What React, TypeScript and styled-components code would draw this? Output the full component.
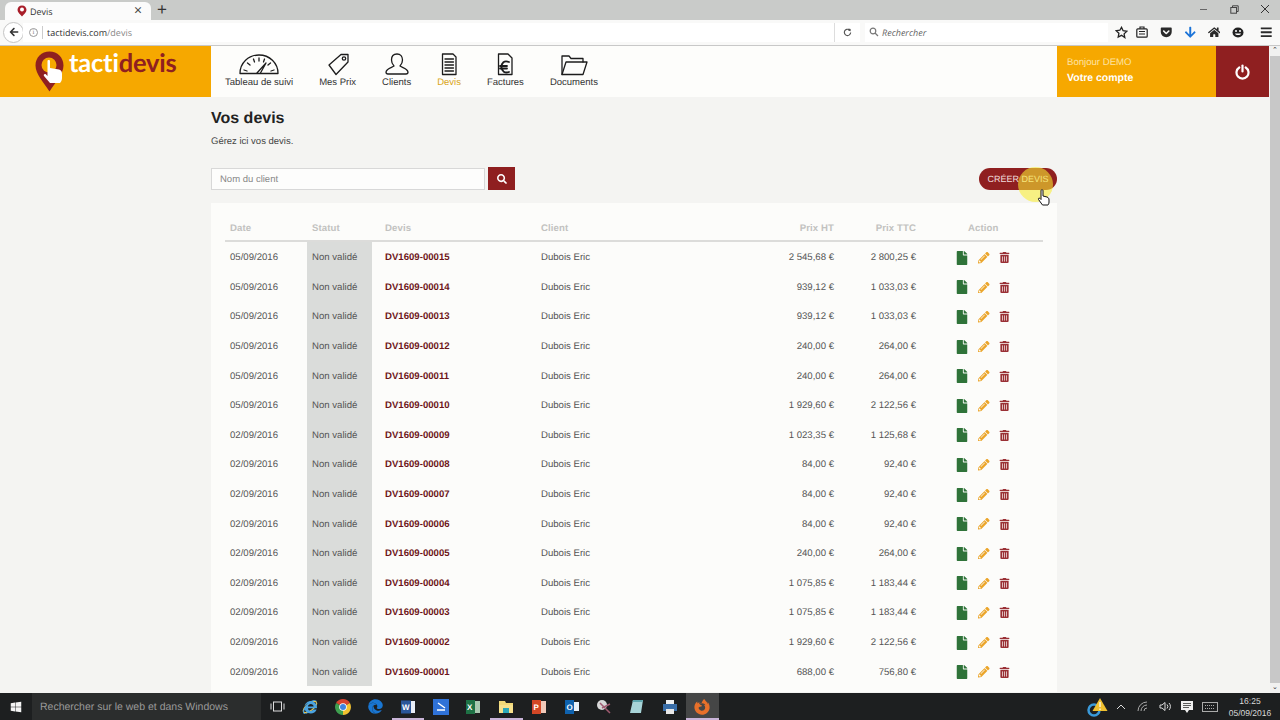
import React from "react";
import styled, { createGlobalStyle } from "styled-components";
import { FaWindows, FaInternetExplorer, FaEdge, FaFirefoxBrowser, FaTrashAlt, FaPencilAlt, FaFile, FaSearch, FaArrowLeft, FaHome, FaArrowDown, FaBars, FaGetPocket } from "react-icons/fa";

const Global = createGlobalStyle`
  html, body { margin: 0; padding: 0; width: 1280px; height: 720px; overflow: hidden; }
  body { font-family: "Liberation Sans", Arial, sans-serif; background: #f4f4f2; text-rendering: geometricPrecision; }
  * { box-sizing: border-box; }
`;

const Screen = styled.div`
  position: relative; width: 1280px; height: 720px; display: flex; flex-direction: column; overflow: hidden;
`;
const TabStrip = styled.div`
  height: 20px; background: #c9cbc9; display: flex; align-items: flex-end; padding-left: 5px; flex: none;
`;
const Tab = styled.div`
  width: 146px; height: 18px; background: #fbfbfb; border-radius: 6px 6px 0 0; display: flex; align-items: center;
  padding: 0 9px 0 12px; gap: 3px; font: 9px "Open Sans", sans-serif; color: #333;
`;
const TabTitle = styled.span` flex: 1; `;
const TabClose = styled.span` font-size: 14px; color: #444; line-height: 1; `;
const NewTab = styled.span` margin-left: 6px; margin-bottom: 1px; font: 17px/18px "Liberation Sans", sans-serif; color: #333; `;
const WinControls = styled.div` margin-left: auto; align-self: stretch; display: flex; `;
const WinBtn = styled.span`
  width: 30.5px; display: flex; align-items: center; justify-content: center; padding-bottom: 2px; color: #444;
`;
const NavBar = styled.div`
  height: 26px; flex: none; background: #f9f9f8; border-bottom: 1px solid #c8c8c8; display: flex; align-items: center; padding: 0 0 1px 3px;
`;
const BackBtn = styled.div`
  width: 21px; height: 21px; border-radius: 50%; background: #fff; border: 1px solid #c4c4c4; display: flex; align-items: center; justify-content: center; color: #333; font-size: 10px; flex: none;
`;
const UrlBox = styled.div`
  width: 815px; height: 19px; margin-left: -1px; background: #fff; display: flex; align-items: center; padding-left: 6px; gap: 3px; font: 9px "Open Sans", sans-serif; color: #333; flex: none;
`;
const InfoDot = styled.span`
  width: 9px; height: 9px; border-radius: 50%; border: 1px solid #999; font: 7px/7px "Liberation Serif", serif; color: #888; text-align: center; flex: none; margin-right: 1px;
`;
const UrlSep = styled.span` width: 1px; height: 13px; background: #ccc; flex: none; margin-right: 1px; `;
const UrlPath = styled.span` color: #888; `;
const Reload = styled.div`
  width: 26px; height: 19px; background: #fff; border-left: 1px solid #ddd; margin-left: -4px; display: flex; align-items: center; justify-content: center; color: #555; flex: none;
`;
const SearchBox = styled.div`
  width: 243px; height: 19px; margin-left: 5px; background: #fff; display: flex; align-items: center; gap: 3px; padding-left: 4px;
  font: italic 9px "Open Sans", sans-serif; color: #666; flex: none;
`;
const ToolIcons = styled.div` display: flex; align-items: center; flex: none; margin-left: 1px; `;
const ToolSlot = styled.span<{ $w?: number; $c?: string }>`
  width: ${p => p.$w ?? 24}px; display: flex; justify-content: center; align-items: center; font-size: 12.5px; color: ${p => p.$c ?? "#2a2a2a"};
`;

const Viewport = styled.div` flex: 1; min-height: 0; display: flex; `;
const Page = styled.div` flex: 1; min-width: 0; display: flex; flex-direction: column; `;
const ScrollTrack = styled.div`
  width: 10px; flex: none; margin-left: 1px; background: #f1f1f0; display: flex; flex-direction: column; align-items: center;
`;
const ScrollArrow = styled.div` height: 10px; font-size: 7px; line-height: 10px; color: #333; flex: none; `;
const ScrollThumb = styled.div` width: 100%; flex: 1; background: #c8c8c8; `;

const Header = styled.header` height: 51px; flex: none; display: flex; background: #fdfdfb; `;
const LogoPanel = styled.div`
  width: 211px; background: #f6a800; display: flex; align-items: flex-start; padding: 5px 0 0 35px; gap: 5px; flex: none;
`;
const LogoText = styled.div` font: 700 25.5px/25px Lato, sans-serif; color: #fff; letter-spacing: -0.2px; `;
const LogoAccent = styled.span` color: #8f2020; `;
const Nav = styled.nav` display: flex; gap: 26px; padding-left: 14px; flex: 1; `;
const NavItem = styled.div<{ $active?: boolean }>`
  display: flex; flex-direction: column; align-items: center; font-size: 9.5px; line-height: 12px; color: ${p => p.$active ? "#d9a520" : "#333"};
  padding-top: 6px; white-space: nowrap;
`;
const NavIcon = styled.svg`
  height: 24px; width: 44px; margin: 0 -12px 1px; fill: none; stroke: #1c1c1c; stroke-width: 1.3; stroke-linejoin: round; stroke-linecap: round; flex: none;
`;
const Account = styled.div` width: 159px; background: #f6a800; color: #fff; padding: 11px 0 0 10px; flex: none; `;
const Hello = styled.div` font-size: 9.6px; color: #fde3a4; line-height: 12px; `;
const YourAccount = styled.div` font-size: 10.5px; font-weight: 700; line-height: 16px; margin-top: 1px; `;
const Logout = styled.div` width: 53px; background: #8f1f20; display: flex; align-items: center; justify-content: center; flex: none; `;

const Content = styled.main` flex: 1; min-height: 0; padding: 12px 0 0 211px; overflow: hidden; `;
const Title = styled.h1` margin: 0; font-size: 16px; line-height: 20px; font-weight: 700; color: #222; `;
const Sub = styled.p` margin: 6px 0 0; font-size: 9.5px; line-height: 14px; color: #444; `;
const Tools = styled.div` width: 846px; display: flex; align-items: center; margin-top: 18px; height: 23px; `;
const NameInput = styled.div`
  width: 274px; height: 22px; background: #fdfdfc; border: 1px solid #d8d8d8; padding-left: 8px; font-size: 9.5px; line-height: 21px; color: #888;
`;
const SearchBtn = styled.div`
  width: 27px; height: 23px; margin-left: 3px; background: #8f1f20; color: #fff; display: flex; align-items: center; justify-content: center; font-size: 10px;
`;
const CreateBtn = styled.div`
  margin-left: auto; width: 78px; height: 22px; border-radius: 11px; background: #8f1f20; color: #f0dcdc; font-size: 9px; line-height: 22px; text-align: center;
`;
const Card = styled.section` width: 846px; margin-top: 13px; background: #fcfcfa; padding: 12px 14px 0; height: 489px; `;
const cols = "82px 65px 156px 190px 116px 82px 1fr";
const HeadRow = styled.div`
  display: grid; grid-template-columns: ${cols}; height: 27px; align-items: center; border-bottom: 2px solid #dcdcda; padding-top: 2px;
  font-size: 9.6px; font-weight: 700; color: #c2c2c0; letter-spacing: 0.1px;
`;
const Row = styled.div`
  display: grid; grid-template-columns: ${cols}; height: 29.6px; align-items: stretch; font-size: 9.6px; color: #555;
`;
const Cell = styled.div<{ $right?: boolean; $pad?: number }>`
  display: flex; align-items: center; padding-left: ${p => p.$pad ?? 0}px; justify-content: ${p => p.$right ? "flex-end" : "flex-start"};
`;
const BodyCell = styled(Cell)` padding-top: 2px; `;
const StatusCell = styled(BodyCell)` background: #dadcda; padding-left: 5px; `;
const RefCell = styled(BodyCell)` font-weight: 700; color: #6d1518; padding-left: 13px; `;
const HeadRight = styled.div` text-align: right; `;
const ActionHead = styled.div` padding-left: 52px; `;
const Actions = styled.div` display: flex; align-items: center; padding-left: 39px; gap: 9px; padding-top: 2px; `;
const GreenDoc = styled.span` color: #2f7339; font-size: 14px; display: flex; `;
const Pencil = styled.span` color: #eba52a; font-size: 11.5px; display: flex; `;
const Trash = styled.span` color: #9a3035; font-size: 11px; display: flex; `;

const Highlight = styled.div`
  position: absolute; left: 1018px; top: 167px; width: 35px; height: 35px; border-radius: 50%; background: rgba(250, 238, 50, 0.58); pointer-events: none;
`;
const CursorHand = styled.svg` position: absolute; left: 1037px; top: 189px; width: 13px; height: 17px; `;

const Taskbar = styled.footer` height: 27px; flex: none; background: #1d1f20; display: flex; align-items: stretch; color: #ddd; `;
const StartBtn = styled.div` width: 32px; display: flex; align-items: center; justify-content: center; color: #f4f4f4; font-size: 12px; flex: none; `;
const TaskSearch = styled.div` width: 229px; background: #2b2d2d; padding-left: 8px; font-size: 10.5px; line-height: 28px; color: #9a9a9a; flex: none; white-space: nowrap; `;
const Slot = styled.div<{ $active?: boolean; $open?: boolean }>`
  width: 32.7px; flex: none; display: flex; align-items: center; justify-content: center; font-size: 15px;
  background: ${p => p.$active ? "#454646" : "transparent"};
  box-shadow: ${p => p.$open ? "inset 0 -2px 0 #c9b4d8" : "none"};
`;
const Tray = styled.div` margin-left: auto; display: flex; align-items: center; flex: none; `;
const TraySlot = styled.div<{ $w: number }>` width: ${p => p.$w}px; display: flex; justify-content: center; align-items: center; `;
const Clock = styled.div` width: 56px; margin-right: 2px; font-size: 8.5px; line-height: 12px; text-align: center; color: #ddd; `;

const Sq = styled.svg` width: 16px; height: 16px; display: block; `;
const SvgLetter = styled.text` font: 700 8px "Liberation Sans", sans-serif; fill: #fff; `;

const data: [string, string, string, string][] = [
  ["05/09/2016", "00015", "2 545,68 €", "2 800,25 €"],
  ["05/09/2016", "00014", "939,12 €", "1 033,03 €"],
  ["05/09/2016", "00013", "939,12 €", "1 033,03 €"],
  ["05/09/2016", "00012", "240,00 €", "264,00 €"],
  ["05/09/2016", "00011", "240,00 €", "264,00 €"],
  ["05/09/2016", "00010", "1 929,60 €", "2 122,56 €"],
  ["02/09/2016", "00009", "1 023,35 €", "1 125,68 €"],
  ["02/09/2016", "00008", "84,00 €", "92,40 €"],
  ["02/09/2016", "00007", "84,00 €", "92,40 €"],
  ["02/09/2016", "00006", "84,00 €", "92,40 €"],
  ["02/09/2016", "00005", "240,00 €", "264,00 €"],
  ["02/09/2016", "00004", "1 075,85 €", "1 183,44 €"],
  ["02/09/2016", "00003", "1 075,85 €", "1 183,44 €"],
  ["02/09/2016", "00002", "1 929,60 €", "2 122,56 €"],
  ["02/09/2016", "00001", "688,00 €", "756,80 €"],
];

const Pin = () => (
  <svg width="29" height="41" viewBox="0 0 29 41">
    <path d="M14.5 0.5C6.5 0.5 0.5 6.5 0.5 14.5C0.5 23 9 32 14.5 40.5C20 32 28.5 23 28.5 14.5C28.5 6.5 22.5 0.5 14.5 0.5Z" fill="#8f2020" />
    <circle cx="14" cy="14" r="7.5" fill="#f6a800" />
    <path d="M12.5 10C12.5 8.8 15 8.8 15 10V17L24 18.5C26.5 19 27 21 27 23V27C27 29 26 31 25 32H15L9 25C8 23.5 10 22.5 11 23.5L12.5 25Z" fill="#fff" />
  </svg>
);

const ChromeLogo = () => (
  <Sq viewBox="0 0 16 16">
    <path d="M8 8L1.1 4A8 8 0 0 1 14.9 4Z" fill="#d8432f" />
    <path d="M8 8L14.9 4A8 8 0 0 1 8 16Z" fill="#f2c230" />
    <path d="M8 8L8 16A8 8 0 0 1 1.1 4Z" fill="#3e9f4f" />
    <circle cx="8" cy="8" r="3.8" fill="#fff" />
    <circle cx="8" cy="8" r="3" fill="#3f83e0" />
  </Sq>
);

const IeLogo = () => (
  <Sq viewBox="0 0 16 16">
    <ellipse cx="8" cy="8" rx="8" ry="3.5" transform="rotate(-38 8 8)" fill="none" stroke="#e8c44a" strokeWidth="1.2" />
    <foreignObject x="1" y="1" width="14" height="14"><FaInternetExplorer color="#4aa3e0" size={14} /></foreignObject>
  </Sq>
);

export default function App() {
  return (
    <Screen>
      <Global />
      <TabStrip>
        <Tab>
          <svg width="10" height="12" viewBox="0 0 10 12"><path d="M5 0.5C2.3.5.5 2.3.5 5C.5 7.5 3.5 9.5 5 11.5C6.5 9.5 9.5 7.5 9.5 5C9.5 2.3 7.7.5 5 .5Z" fill="#a81e2a" /><circle cx="5" cy="4.6" r="2" fill="#fff" /></svg>
          <TabTitle>Devis</TabTitle>
          <TabClose>×</TabClose>
        </Tab>
        <NewTab>+</NewTab>
        <WinControls>
          <WinBtn><svg width="9" height="9" viewBox="0 0 9 9"><path d="M1 4.5H8" stroke="#666" /></svg></WinBtn>
          <WinBtn><svg width="9" height="9" viewBox="0 0 9 9" fill="none" stroke="#444"><path d="M2.5 2.5V.8H8.2V6.5H6.5" /><rect x=".8" y="2.5" width="5.7" height="5.7" /></svg></WinBtn>
          <WinBtn><svg width="10" height="10" viewBox="0 0 10 10" stroke="#333"><path d="M1 1L9 9M9 1L1 9" /></svg></WinBtn>
        </WinControls>
      </TabStrip>
      <NavBar>
        <BackBtn><FaArrowLeft /></BackBtn>
        <UrlBox>
          <InfoDot>i</InfoDot>
          <UrlSep />
          <span>tactidevis.com<UrlPath>/devis</UrlPath></span>
        </UrlBox>
        <Reload><svg width="9" height="9" viewBox="0 0 10 10" fill="none" stroke="#555" strokeWidth="1.3"><path d="M8.5 5A3.5 3.5 0 1 1 7 2" /><path d="M6 .5L8.5 1V3.5L6 3Z" fill="#555" stroke="none" /></svg></Reload>
        <SearchBox>
          <svg width="10" height="10" viewBox="0 0 10 10" fill="none" stroke="#777" strokeWidth="1.2"><circle cx="4" cy="4" r="2.8" /><path d="M6 6L9 9" /></svg>
          Rechercher
        </SearchBox>
        <ToolIcons>
          <ToolSlot $w={24}><svg width="13" height="13" viewBox="0 0 24 24" fill="none" stroke="#222" strokeWidth="2.4"><path d="M12 2.5l3 6.3 6.8.9-5 4.8 1.3 6.9L12 17.2l-6.1 3.2 1.3-6.9-5-4.8 6.8-.9z" /></svg></ToolSlot>
          <ToolSlot $w={18}><svg width="12" height="12" viewBox="0 0 12 12" fill="none" stroke="#222" strokeWidth="1.2"><rect x=".8" y="2.8" width="10.4" height="8.4" rx="1" /><path d="M4 2.8V1H8V2.8M3 5.5H9M3 8H9" /></svg></ToolSlot>
          <ToolSlot $w={30}><FaGetPocket /></ToolSlot>
          <ToolSlot $w={18} $c="#1a73d8"><FaArrowDown /></ToolSlot>
          <ToolSlot $w={30}><FaHome /></ToolSlot>
          <ToolSlot $w={18}><svg width="12" height="11" viewBox="0 0 12 11"><ellipse cx="6" cy="5.5" rx="5.5" ry="5" fill="#222" /><circle cx="4" cy="4" r="1" fill="#fff" /><circle cx="8" cy="4" r="1" fill="#fff" /><path d="M3 6.5H9C8.5 8.5 3.5 8.5 3 6.5Z" fill="#fff" /></svg></ToolSlot>
          <ToolSlot $w={38}><FaBars /></ToolSlot>
        </ToolIcons>
      </NavBar>
      <Viewport>
        <Page>
          <Header>
            <LogoPanel>
              <Pin />
              <LogoText>tacti<LogoAccent>devis</LogoAccent></LogoText>
            </LogoPanel>
            <Nav>
              <NavItem>
                <NavIcon viewBox="0 0 44 24">
                  <path d="M3 21.5C3 11 11.5 3 22 3C32.5 3 41 11 41 21.5Z" />
                  <path d="M7 18L10 19M10.5 11L13 13M16.5 7L17.5 10M22 6V9M27.5 7L26.5 10M33.5 11L31 13M37 18L34 19" />
                  <path d="M20 21L29 11L23.5 21" />
                </NavIcon>
                Tableau de suivi
              </NavItem>
              <NavItem>
                <NavIcon viewBox="0 0 44 24">
                  <path d="M13 13L25 2.5H32V10L20 22.5Z" />
                  <circle cx="28" cy="6.5" r="1.7" />
                </NavIcon>
                Mes Prix
              </NavItem>
              <NavItem>
                <NavIcon viewBox="0 0 44 24">
                  <path d="M22 2C18.5 2 16.5 4.5 16.5 8C16.5 10.5 18 13 19 14C17 15.5 11.5 16.5 11 20C11 21.5 11.5 22 13 22H31C32.5 22 33 21.5 33 20C32.5 16.5 27 15.5 25 14C26 13 27.5 10.5 27.5 8C27.5 4.5 25.5 2 22 2Z" />
                </NavIcon>
                Clients
              </NavItem>
              <NavItem $active>
                <NavIcon viewBox="0 0 44 24">
                  <path d="M15.5 2H26L29 5V22.5H15.5Z" />
                  <path d="M18 7H26.5M18 10H26.5M18 13H26.5M18 16H26.5M18 19H26.5" />
                </NavIcon>
                Devis
              </NavItem>
              <NavItem>
                <NavIcon viewBox="0 0 44 24">
                  <path d="M15.5 2H25L29 6V22.5H15.5Z" />
                  <path d="M26 10C21 8 18.5 11 18.5 15C18.5 19.5 22 21.5 26 20M17 14H24M17 16.5H24" strokeWidth="1.8" />
                </NavIcon>
                Factures
              </NavItem>
              <NavItem>
                <NavIcon viewBox="0 0 44 24">
                  <path d="M10 22.5V4H17L19 6.5H31V10" />
                  <path d="M10 22.5L14 10H35L31 22.5Z" />
                </NavIcon>
                Documents
              </NavItem>
            </Nav>
            <Account>
              <Hello>Bonjour DEMO</Hello>
              <YourAccount>Votre compte</YourAccount>
            </Account>
            <Logout>
              <svg width="15" height="16" viewBox="0 0 15 16" fill="none" stroke="#fff" strokeWidth="2.2" strokeLinecap="round"><path d="M4.3 3.5A6 6 0 1 0 10.7 3.5" /><path d="M7.5 1.5V7.5" /></svg>
            </Logout>
          </Header>
          <Content>
            <Title>Vos devis</Title>
            <Sub>Gérez ici vos devis.</Sub>
            <Tools>
              <NameInput>Nom du client</NameInput>
              <SearchBtn><FaSearch /></SearchBtn>
              <CreateBtn>CRÉER DEVIS</CreateBtn>
            </Tools>
            <Card>
              <HeadRow>
                <Cell $pad={5}>Date</Cell>
                <Cell $pad={5}>Statut</Cell>
                <Cell $pad={13}>Devis</Cell>
                <Cell $pad={13}>Client</Cell>
                <HeadRight>Prix HT</HeadRight>
                <HeadRight>Prix TTC</HeadRight>
                <ActionHead>Action</ActionHead>
              </HeadRow>
              {data.map(([date, ref, ht, ttc]) => (
                <Row key={ref}>
                  <BodyCell $pad={5}>{date}</BodyCell>
                  <StatusCell>Non validé</StatusCell>
                  <RefCell>DV1609-{ref}</RefCell>
                  <BodyCell $pad={13}>Dubois Eric</BodyCell>
                  <BodyCell $right>{ht}</BodyCell>
                  <BodyCell $right>{ttc}</BodyCell>
                  <Actions>
                    <GreenDoc><FaFile /></GreenDoc>
                    <Pencil><FaPencilAlt /></Pencil>
                    <Trash><FaTrashAlt /></Trash>
                  </Actions>
                </Row>
              ))}
            </Card>
          </Content>
        </Page>
        <ScrollTrack>
          <ScrollArrow>⌃</ScrollArrow>
          <ScrollThumb />
          <ScrollArrow>⌄</ScrollArrow>
        </ScrollTrack>
      </Viewport>
      <Taskbar>
        <StartBtn><FaWindows /></StartBtn>
        <TaskSearch>Rechercher sur le web et dans Windows</TaskSearch>
        <Slot>
          <svg width="15" height="11" viewBox="0 0 15 11" fill="none" stroke="#ddd"><rect x="3.5" y="1" width="8" height="9" /><path d="M1 2.5V8.5M14 2.5V8.5" /></svg>
        </Slot>
        <Slot><IeLogo /></Slot>
        <Slot><ChromeLogo /></Slot>
        <Slot><FaEdge color="#1976d2" /></Slot>
        <Slot $open><Sq viewBox="0 0 16 16"><rect x="6" y="2" width="9" height="12" fill="#e8eef8" /><rect x="1" y="1.5" width="10" height="13" fill="#2a5699" /><SvgLetter x="2" y="11">W</SvgLetter></Sq></Slot>
        <Slot><Sq viewBox="0 0 16 16"><rect x="0" y="0" width="16" height="16" fill="#2f72d8" /><path d="M4 11L12 11M5 4L12 9" stroke="#fff" strokeWidth="1.5" /></Sq></Slot>
        <Slot><Sq viewBox="0 0 16 16"><rect x="7" y="2" width="8" height="12" fill="#a8c8b0" /><rect x="1" y="1" width="9" height="14" fill="#1e7145" /><SvgLetter x="2" y="11">X</SvgLetter></Sq></Slot>
        <Slot $open><Sq viewBox="0 0 16 16"><path d="M1 2H7L8 4H15V14H1Z" fill="#f0d878" /><rect x="1" y="6" width="14" height="8" fill="#f6e08c" /><rect x="5" y="9" width="6" height="5" fill="#2aa7b8" /></Sq></Slot>
        <Slot><Sq viewBox="0 0 16 16"><rect x="6" y="2" width="9" height="12" fill="#f0c8b8" /><rect x="1" y="1" width="9" height="14" fill="#d24726" /><SvgLetter x="2.5" y="11">P</SvgLetter></Sq></Slot>
        <Slot><Sq viewBox="0 0 16 16"><rect x="7" y="3" width="8" height="9" fill="#e8f0f8" /><rect x="1" y="1" width="9" height="14" fill="#0f62ae" /><SvgLetter x="2.5" y="11">O</SvgLetter></Sq></Slot>
        <Slot><Sq viewBox="0 0 16 16"><circle cx="6" cy="6" r="5" fill="#d8d8d8" /><path d="M4 4L14 14M6 9L14 5" stroke="#a05a70" strokeWidth="1.5" /></Sq></Slot>
        <Slot><Sq viewBox="0 0 16 16"><path d="M4 1H14L12 14H1Z" fill="#a8d4d8" /><path d="M4 1H14L13.5 3H3.5Z" fill="#5fa8b0" /></Sq></Slot>
        <Slot><Sq viewBox="0 0 16 16"><rect x="4" y="1" width="8" height="5" fill="#f0f0f0" /><rect x="1" y="5" width="14" height="7" fill="#3a6ea8" /><rect x="4" y="10" width="8" height="5" fill="#e8e8e8" /></Sq></Slot>
        <Slot $active $open><FaFirefoxBrowser color="#e8702a" size={16} /></Slot>
        <Tray>
          <TraySlot $w={26}>
            <svg width="22" height="20" viewBox="0 0 22 20"><circle cx="7" cy="13" r="5.5" fill="none" stroke="#3a9ad9" strokeWidth="2.5" /><path d="M13 1L20.5 14H5.5Z" fill="#f0c030" /><path d="M13 5V10M13 11.5V13" stroke="#fff" strokeWidth="1.2" /></svg>
          </TraySlot>
          <TraySlot $w={20}><svg width="10" height="6" viewBox="0 0 10 6" fill="none" stroke="#ddd"><path d="M1 5L5 1L9 5" /></svg></TraySlot>
          <TraySlot $w={24}><svg width="12" height="11" viewBox="0 0 12 11" fill="none" stroke="#aaa"><path d="M1 10A9 9 0 0 1 10 1M4 10A6 6 0 0 1 10 4M7 10A3 3 0 0 1 10 7" /></svg></TraySlot>
          <TraySlot $w={21}><svg width="13" height="11" viewBox="0 0 13 11" fill="none" stroke="#ddd"><path d="M1 4V7H3L6 9.5V1.5L3 4Z" /><path d="M8 3.5A3 3 0 0 1 8 7.5M10 2A5 5 0 0 1 10 9" /></svg></TraySlot>
          <TraySlot $w={22}><svg width="12" height="12" viewBox="0 0 12 12"><path d="M0 0H12V9H8L6 12L4 9H0Z" fill="#f0f0f0" /><path d="M2 2.5H10M2 4.5H10M2 6.5H8" stroke="#333" strokeWidth=".8" /></svg></TraySlot>
          <TraySlot $w={24}><svg width="16" height="10" viewBox="0 0 16 10" fill="none" stroke="#aaa"><rect x=".5" y=".5" width="15" height="9" /><path d="M3 3.500H13M3 6.500H13" strokeDasharray="1 1" /></svg></TraySlot>
          <Clock>16:25<br />05/09/2016</Clock>
        </Tray>
      </Taskbar>
      <Highlight />
      <CursorHand viewBox="0 0 13 17">
        <path d="M4 1.5C4 .5 6 .5 6 1.5V7L10 8C11.5 8.5 12 9.5 12 11V13C12 14.5 11.5 15.5 11 16H5.5L1.5 10.5C1 9.5 2 8.5 3 9.5L4 10.5Z" fill="#fff" stroke="#111" strokeWidth="1" />
      </CursorHand>
    </Screen>
  );
}
